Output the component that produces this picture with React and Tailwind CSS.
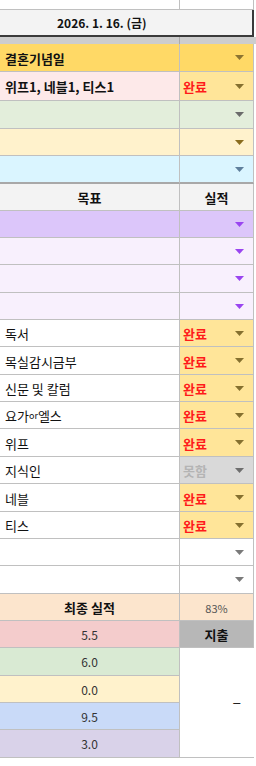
import React from "react";

function Arrow({ fill }) {
  return (
    <svg width="9" height="5" viewBox="0 0 9 5" className="shrink-0">
      <polygon points="0,0 9,0 4.5,5" fill={fill} />
    </svg>
  );
}

const rowsTop = [
  { h: "h-[28px]", lbg: "bg-[#ffd966]", rbg: "bg-[#ffd966]", text: "결혼기념일", bold: true, arrow: "#8c7431" },
  { h: "h-[29px]", lbg: "bg-[#fde9e9]", rbg: "bg-[#ffe599]", text: "위프1, 네블1, 티스1", bold: true, val: "완료", arrow: "#85702f" },
  { h: "h-[28px]", lbg: "bg-[#e3eedb]", rbg: "bg-[#e3eedb]", text: "", arrow: "#6b6b6b" },
  { h: "h-[27px]", lbg: "bg-[#fff2cc]", rbg: "bg-[#fff2cc]", text: "", arrow: "#8a6d1e" },
];

const rowsGoal = [
  { h: "h-[27px]", lbg: "bg-[#dcc6fa]", rbg: "bg-[#dcc6fa]", text: "", arrow: "#9a45f0" },
  { h: "h-[27px]", lbg: "bg-[#f8f0fd]", rbg: "bg-[#f8f0fd]", text: "", arrow: "#9a45f0" },
  { h: "h-[28px]", lbg: "bg-[#f8f0fd]", rbg: "bg-[#f8f0fd]", text: "", arrow: "#9a45f0" },
  { h: "h-[27px]", lbg: "bg-[#f8f0fd]", rbg: "bg-[#f8f0fd]", text: "", arrow: "#9a45f0" },
  { h: "h-[27px]", lbg: "bg-white", rbg: "bg-[#ffe599]", text: "독서", val: "완료", arrow: "#85702f" },
  { h: "h-[28px]", lbg: "bg-white", rbg: "bg-[#ffe599]", text: "목실감시금부", val: "완료", arrow: "#85702f" },
  { h: "h-[27px]", lbg: "bg-white", rbg: "bg-[#ffe599]", text: "신문 및 칼럼", val: "완료", arrow: "#85702f" },
  { h: "h-[27px]", lbg: "bg-white", rbg: "bg-[#ffe599]", text: "요가or엘스", yoga: true, val: "완료", arrow: "#85702f" },
  { h: "h-[28px]", lbg: "bg-white", rbg: "bg-[#ffe599]", text: "위프", val: "완료", arrow: "#85702f" },
  { h: "h-[27px]", lbg: "bg-white", rbg: "bg-[#d9d9d9]", text: "지식인", val: "못함", gray: true, arrow: "#6e6e6e" },
  { h: "h-[28px]", lbg: "bg-white", rbg: "bg-[#ffe599]", text: "네블", val: "완료", arrow: "#85702f" },
  { h: "h-[27px]", lbg: "bg-white", rbg: "bg-[#ffe599]", text: "티스", val: "완료", arrow: "#85702f" },
  { h: "h-[27px]", lbg: "bg-white", rbg: "bg-white", text: "", arrow: "#7a7a7a" },
  { h: "h-[28px]", lbg: "bg-white", rbg: "bg-white", text: "", arrow: "#7a7a7a" },
];

function DataRow({ r, extra = "border-b" }) {
  return (
    <div className={`flex w-[254px] ${r.h}`}>
      <div
        className={`flex items-center pl-[5px] pt-[2px] w-[180px] border-r ${extra} border-[#c0c0c0] ${r.lbg} text-[13px] leading-[16px] text-[#111] whitespace-nowrap ${r.bold ? "font-bold" : "font-normal"}`}
      >
        {r.yoga ? (
          <span>
            요가<span className="text-[9px] align-[2px]">or</span>엘스
          </span>
        ) : (
          r.text
        )}
      </div>
      <div
        className={`flex items-center justify-between pl-[3px] pr-[9px] w-[74px] border-r ${extra} border-[#c0c0c0] ${r.rbg}`}
      >
        <span
          className={`pt-[2px] text-[13px] leading-[16px] font-bold ${r.gray ? "text-[#b4b4b4]" : "text-[#ff1a1a]"}`}
        >
          {r.val || ""}
        </span>
        <Arrow fill={r.arrow} />
      </div>
    </div>
  );
}

const numRows = [
  { h: "h-[28px]", bg: "bg-[#d9ead3]", v: "6.0" },
  { h: "h-[27px]", bg: "bg-[#fff2cc]", v: "0.0" },
  { h: "h-[27px]", bg: "bg-[#c9daf8]", v: "9.5" },
  { h: "h-[28px]", bg: "bg-[#d9d2e9]", v: "3.0" },
];

export default function App() {
  return (
    <div className="w-[256px] h-[766px] bg-white overflow-hidden font-['Noto_Sans_CJK_KR',sans-serif] text-[#111]">
      {/* top strip */}
      <div className="flex w-[254px] h-[10px]">
        <div className="w-[180px] border-r border-b border-[#c0c0c0] bg-white" />
        <div className="w-[74px] border-r border-b border-[#c0c0c0] bg-white" />
      </div>
      {/* date row */}
      <div className="flex items-center w-[254px] h-[27px] pl-[57px] pt-[1px] bg-[#f3f3f3] border-b-2 border-r-2 border-[#3a3a3a] text-[12px] leading-[16px] font-bold whitespace-nowrap">
        2026. 1. 16. (금)
      </div>
      {/* frozen band */}
      <div className="flex w-[256px] h-[7px] bg-[#cdcdcd]">
        <div className="w-[180px] border-r border-[#a9a9a9]" />
      </div>

      {rowsTop.map((r, i) => (
        <DataRow key={i} r={r} />
      ))}
      <DataRow
        r={{ h: "h-[28px]", lbg: "bg-[#daf5ff]", rbg: "bg-[#daf5ff]", text: "", arrow: "#5f7f9c" }}
        extra="border-b-2 border-b-[#a8a8a8]"
      />

      {/* header */}
      <div className="flex w-[254px] h-[27px] text-[13px] leading-[16px] font-bold">
        <div className="flex items-center justify-center w-[180px] pt-[1px] border-r border-b border-[#c0c0c0] bg-[#f3f3f3]">
          목표
        </div>
        <div className="flex items-center justify-center w-[74px] pt-[1px] border-r border-b border-[#c0c0c0] bg-[#f3f3f3]">
          실적
        </div>
      </div>

      {rowsGoal.map((r, i) => (
        <DataRow key={i} r={r} />
      ))}

      {/* final result */}
      <div className="flex w-[254px] h-[27px] bg-[#fce5cd]">
        <div className="flex items-center justify-center w-[180px] pt-[1px] border-r border-b border-[#c0c0c0] text-[13px] leading-[16px] font-bold">
          최종 실적
        </div>
        <div className="flex items-center justify-center w-[74px] pt-[1px] border-r border-b border-[#c0c0c0] text-[11px] leading-[14px] text-[#555]">
          83%
        </div>
      </div>

      {/* bottom block */}
      <div className="flex w-[254px]">
        <div className="flex flex-col w-[180px]">
          <div className="flex items-center justify-center h-[27px] pt-[1px] border-r border-b border-[#c0c0c0] bg-[#f4cccc] text-[12px] leading-[16px] text-[#333]">
            5.5
          </div>
          {numRows.map((n, i) => (
            <div
              key={i}
              className={`flex items-center justify-center ${n.h} pt-[1px] border-r border-b border-[#c0c0c0] ${n.bg} text-[12px] leading-[16px] text-[#333]`}
            >
              {n.v}
            </div>
          ))}
        </div>
        <div className="flex flex-col w-[74px]">
          <div className="flex items-center justify-center h-[27px] pt-[1px] border-r border-b border-[#c0c0c0] bg-[#b7b7b7] text-[13px] leading-[16px] font-bold">
            지출
          </div>
          <div className="flex items-center justify-end flex-1 pr-[13px] pb-[4px] border-b border-[#c0c0c0] bg-white text-[16px] leading-[16px] text-[#222]">
            –
          </div>
        </div>
      </div>
    </div>
  );
}
